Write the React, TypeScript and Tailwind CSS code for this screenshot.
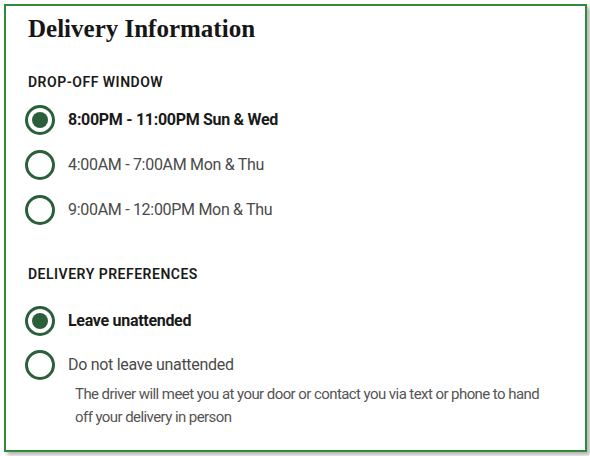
import { FC, JSX, useState } from 'react';

interface RadioRowProps {
  label: string;
  checked: boolean;
  onSelect: () => void;
}

const RadioRow: FC<RadioRowProps> = ({ label, checked, onSelect }): JSX.Element => (
  <button
    type="button"
    onClick={onSelect}
    className="flex h-[30px] items-center gap-[13px] text-left"
  >
    <span className="flex size-[30px] shrink-0 items-center justify-center rounded-full border-[3px] border-[#2b5e3b] bg-white">
      {checked && <span className="size-[16px] rounded-full bg-[#2b5e3b]" />}
    </span>
    <span
      className={
        checked
          ? 'text-[16px] leading-[30px] font-bold tracking-[-0.3px] text-[#1a1a1a]'
          : 'text-[16px] leading-[30px] font-normal tracking-[-0.3px] text-[#4a4a4a]'
      }
    >
      {label}
    </span>
  </button>
);

const windows = ['8:00PM - 11:00PM Sun & Wed', '4:00AM - 7:00AM Mon & Thu', '9:00AM - 12:00PM Mon & Thu'];

export default function App(): JSX.Element {
  const [windowIdx, setWindowIdx] = useState(0);
  const [attended, setAttended] = useState(false);

  return (
    <div className="min-h-screen bg-white pt-[4px] pl-[4px]" style={{ fontFamily: 'Roboto, "Liberation Sans", sans-serif' }}>
      <div className="flex h-[448px] w-[583px] flex-col border-2 border-[#2f8a3b] bg-white pt-[8px] pl-[19px] shadow-[3px_3px_4px_rgba(0,0,0,0.3)]">
        <h2
          className="ml-[3px] text-[25px] leading-[30px] font-bold text-[#161616]"
          style={{ fontFamily: '"Liberation Serif", serif' }}
        >
          Delivery Information
        </h2>

        <h3 className="mt-[28px] ml-[3px] text-[14px] leading-[20px] font-semibold tracking-[0.5px] text-[#1a1a1a]">
          DROP-OFF WINDOW
        </h3>
        <div className="mt-[13px] flex flex-col gap-[15px]">
          {windows.map((w, i) => (
            <RadioRow
              key={w}
              label={w}
              checked={windowIdx === i}
              onSelect={() => setWindowIdx(i)}
            />
          ))}
        </div>

        <h3 className="mt-[39px] ml-[3px] text-[14px] leading-[20px] font-semibold tracking-[0.5px] text-[#1a1a1a]">
          DELIVERY PREFERENCES
        </h3>
        <div className="mt-[22px] flex flex-col gap-[14px]">
          <RadioRow
            label="Leave unattended"
            checked={!attended}
            onSelect={() => setAttended(false)}
          />
          <RadioRow
            label="Do not leave unattended"
            checked={attended}
            onSelect={() => setAttended(true)}
          />
        </div>
        <p className="mt-[3px] ml-[50px] w-[470px] text-[15px] leading-[23px] tracking-[-0.57px] text-[#555555]">
          The driver will meet you at your door or contact you via text or phone to hand off your delivery in person
        </p>
      </div>
    </div>
  );
}
